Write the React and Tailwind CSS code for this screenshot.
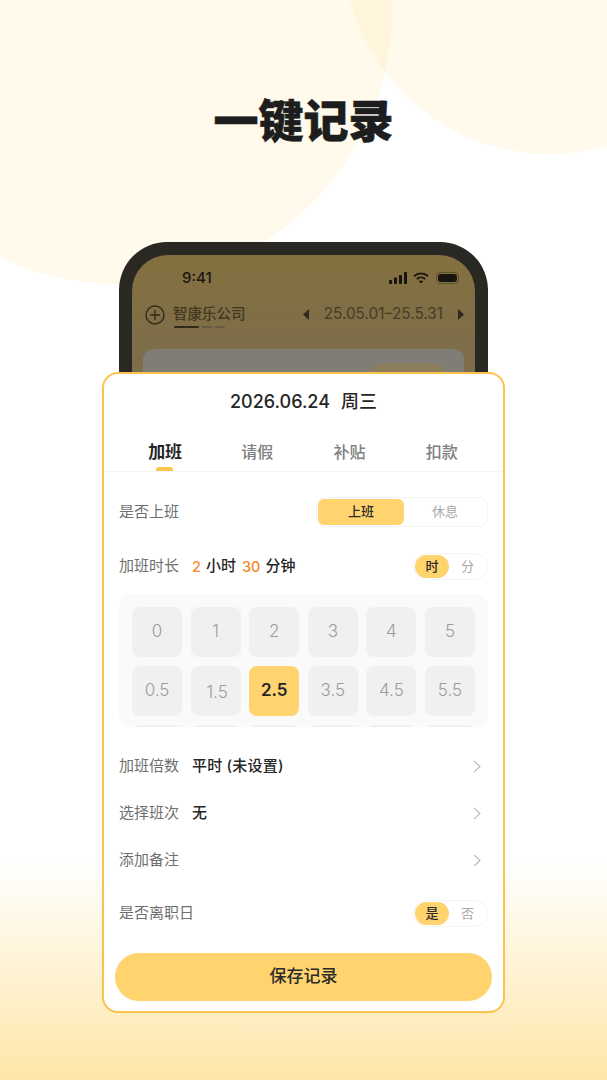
import React from "react";

const FONT = "font-['Inter','Noto_Sans_CJK_SC',sans-serif]";

function Chevron() {
  return (
    <svg width="8" height="13" viewBox="0 0 8 13" fill="none" className="mr-[7px]">
      <path d="M1 0.8 L7 6.5 L1 12.2" stroke="#b8b8b8" strokeWidth="1.1" />
    </svg>
  );
}

function Tri({ right }) {
  return (
    <svg width="6" height="11" viewBox="0 0 6 11">
      <path d={right ? "M0 0 L6 5.5 L0 11 Z" : "M6 0 L0 5.5 L6 11 Z"} fill="#2f2a1c" />
    </svg>
  );
}

function Pill({ on, off }) {
  return (
    <div className="flex h-[27px] w-[75px] items-center rounded-full border border-[#f4f4f4] p-px">
      <div className="flex h-[23px] w-[34px] items-center justify-center rounded-full bg-[#ffd36e] text-[13px] font-medium text-[#2a2a2a]">{on}</div>
      <div className="flex-1 text-center text-[13px] text-[#a8a8a8]">{off}</div>
    </div>
  );
}

function LinkRow({ label, value }) {
  return (
    <div className="flex h-[47px] items-center justify-between">
      <div className="flex items-center">
        <span className="w-[73px] text-[15px] text-[#6f6f6f]">{label}</span>
        <span className="text-[15px] font-medium tracking-[0.2px] text-[#262626]">{value}</span>
      </div>
      <Chevron />
    </div>
  );
}

const ROWS = [
  ["0", "1", "2", "3", "4", "5"],
  ["0.5", "1.5", "2.5", "3.5", "4.5", "5.5"],
  ["", "", "", "", "", ""],
];

export default function App() {
  return (
    <div className={`relative h-[1080px] w-[607px] overflow-hidden bg-white ${FONT}`}>
      {/* decorative background */}
      <div className="absolute left-[-156px] top-[-264px] h-[548px] w-[548px] rounded-full bg-[#ffdf80] opacity-[0.16]" />
      <div className="absolute left-[343px] top-[-260px] h-[414px] w-[414px] rounded-full bg-[#ffdf80] opacity-[0.16]" />
      <div className="absolute bottom-0 left-0 h-[220px] w-full bg-linear-to-b from-white to-[#ffe6a8]" />

      <div className="relative flex flex-col items-center">
        <h1 className="mt-[92px] h-[60px] text-center text-[45px] font-black leading-[60px] text-[#1d1d1d] [-webkit-text-stroke:0.6px_#1d1d1d]">一键记录</h1>

        {/* phone behind the sheet */}
        <div className="mt-[90px] h-[160px] w-[369px] overflow-hidden rounded-t-[48px] bg-[#2a2823] px-[13px] pt-[13px]">
          <div className="h-[147px] rounded-t-[36px] bg-linear-to-b from-[#84703f] to-[#7a6c4e] px-[11px]">
            <div className="flex h-[44px] items-center justify-between pl-[39px] pr-[5px] pt-[2px]">
              <span className="text-[15px] font-medium text-[#1b1812]">9:41</span>
              <div className="flex items-center gap-[5px]">
                <svg width="19" height="12" viewBox="0 0 19 12" fill="#17140d">
                  <rect x="0" y="8" width="3" height="4" rx="0.8" />
                  <rect x="5" y="5.5" width="3" height="6.5" rx="0.8" />
                  <rect x="10" y="3" width="3" height="9" rx="0.8" />
                  <rect x="15" y="0" width="3" height="12" rx="0.8" />
                </svg>
                <svg width="16" height="12" viewBox="0 0 16 12" fill="none" stroke="#17140d" strokeWidth="1.9">
                  <path d="M1 4.2 C5 0.4 11 0.4 15 4.2" />
                  <path d="M3.8 7 C6.2 4.8 9.8 4.8 12.2 7" />
                  <path d="M8 11.6 L5.9 9.3 C7.1 8.3 8.9 8.3 10.1 9.3 Z" fill="#17140d" stroke="none" />
                </svg>
                <div className="ml-[2px] flex h-[12px] w-[23px] items-center rounded-[4px] border border-[#5e5130] p-px">
                  <div className="h-full w-full rounded-[3px] bg-[#17140d]" />
                </div>
              </div>
            </div>
            <div className="mt-[3px] flex h-[34px] items-start">
              <svg width="20" height="20" viewBox="0 0 20 20" fill="none" stroke="#332c1a" strokeWidth="1.4" className="ml-[2px] mt-[3px]">
                <circle cx="10" cy="10" r="9" />
                <path d="M10 5 V15 M5 10 H15" />
              </svg>
              <div className="ml-[8px] flex flex-col">
                <span className="text-[14.5px] font-medium leading-[24px] text-[#41391f]">智康乐公司</span>
                <div className="flex items-center gap-[3px] pl-px">
                  <div className="h-[2px] w-[25px] rounded-full bg-[#2f2a1c]" />
                  <div className="h-[2px] w-[10px] rounded-full bg-[#675c42]" />
                  <div className="h-[2px] w-[10px] rounded-full bg-[#675c42]" />
                </div>
              </div>
              <div className="ml-auto flex h-[24px] items-center">
                <Tri />
                <span className="mx-[15px] text-[15.3px] text-[#453c28]">25.05.01–25.5.31</span>
                <Tri right />
              </div>
            </div>
            <div className="mt-[13px] h-[60px] rounded-t-[10px] bg-[#807d76] pl-[223px] pt-[14px]">
              <div className="h-[40px] w-[83px] rounded-[20px] bg-[#8c7d5c]" />
            </div>
          </div>
        </div>

        {/* sheet */}
        <div className="relative -mt-[30px] h-[641px] w-[403px] rounded-[16px] border-2 border-[#fac34d] bg-white">
          <div className="flex h-[54px] items-center justify-center gap-[11px] pt-px text-[18px] font-medium text-[#262626]">
            <span>2026.06.24</span>
            <span>周三</span>
          </div>
          <div className="relative grid h-[44px] grid-cols-4 border-b border-[#f6f6f6] px-[15px] pt-[10px] text-center text-[16px] leading-[28px] text-[#808080]">
            <div className="relative text-[17px] font-semibold text-[#262626]">
              加班
              <div className="absolute bottom-0 left-[37px] h-[4px] w-[17px] rounded-t-[3px] bg-[#fbc54f]" />
            </div>
            <div className="font-medium">请假</div>
            <div className="font-medium">补贴</div>
            <div className="font-medium">扣款</div>
          </div>

          <div className="px-[15px]">
            <div className="mt-[25px] flex h-[30px] items-center justify-between">
              <span className="text-[15px] text-[#6f6f6f]">是否上班</span>
              <div className="flex h-[30px] w-[172px] items-center rounded-[9px] border border-[#f4f4f4] p-px">
                <div className="flex h-[26px] w-[86px] items-center justify-center rounded-[6px] bg-[#ffd36e] text-[13px] font-medium text-[#2a2a2a]">上班</div>
                <div className="flex-1 text-center text-[13px] text-[#a8a8a8]">休息</div>
              </div>
            </div>

            <div className="mt-[26px] flex h-[27px] items-center justify-between">
              <div className="flex items-center text-[15px] font-medium text-[#262626]">
                <span className="w-[73px] font-normal text-[#6f6f6f]">加班时长</span>
                <span className="text-[14.5px] text-[#f5892b]">2</span>
                <span className="ml-[5px]">小时</span>
                <span className="ml-[6px] text-[14.5px] text-[#f5892b]">30</span>
                <span className="ml-[5px]">分钟</span>
              </div>
              <Pill on="时" off="分" />
            </div>

            <div className="mt-[14px] flex h-[133px] flex-col gap-[9px] overflow-hidden rounded-[12px] bg-[#fafafa] px-[13px] pt-[13px]">
              {ROWS.map((row, r) => (
                <div key={r} className="grid shrink-0 grid-cols-6 gap-[8.6px]">
                  {row.map((n, i) => (
                    <div
                      key={i}
                      className={
                        n === "2.5"
                          ? "flex h-[50px] items-center justify-center rounded-[8px] bg-[#ffd36e] text-[17px] font-semibold text-[#262626]"
                          : n === "1.5"
                            ? "flex h-[50px] items-center justify-center rounded-[8px] bg-[#f0f0f0] pl-[3px] pt-[4px] text-[17px] font-light text-[#9c9c9c]"
                            : "flex h-[50px] items-center justify-center rounded-[8px] bg-[#f0f0f0] text-[17px] font-light text-[#9c9c9c]"
                      }
                    >
                      {n}
                    </div>
                  ))}
                </div>
              ))}
            </div>

            <div className="mt-[16px]">
              <LinkRow label="加班倍数" value="平时 (未设置)" />
              <LinkRow label="选择班次" value="无" />
              <LinkRow label="添加备注" value="" />
            </div>

            <div className="mt-[16px] flex h-[27px] items-center justify-between">
              <span className="text-[15px] text-[#6f6f6f]">是否离职日</span>
              <Pill on="是" off="否" />
            </div>
          </div>

          <div className="ml-[11px] mt-[26px] flex h-[48px] w-[377px] items-center justify-center rounded-full bg-[#ffd36e] text-[17px] font-medium text-[#2a2a2a]">
            保存记录
          </div>
        </div>
      </div>
    </div>
  );
}
